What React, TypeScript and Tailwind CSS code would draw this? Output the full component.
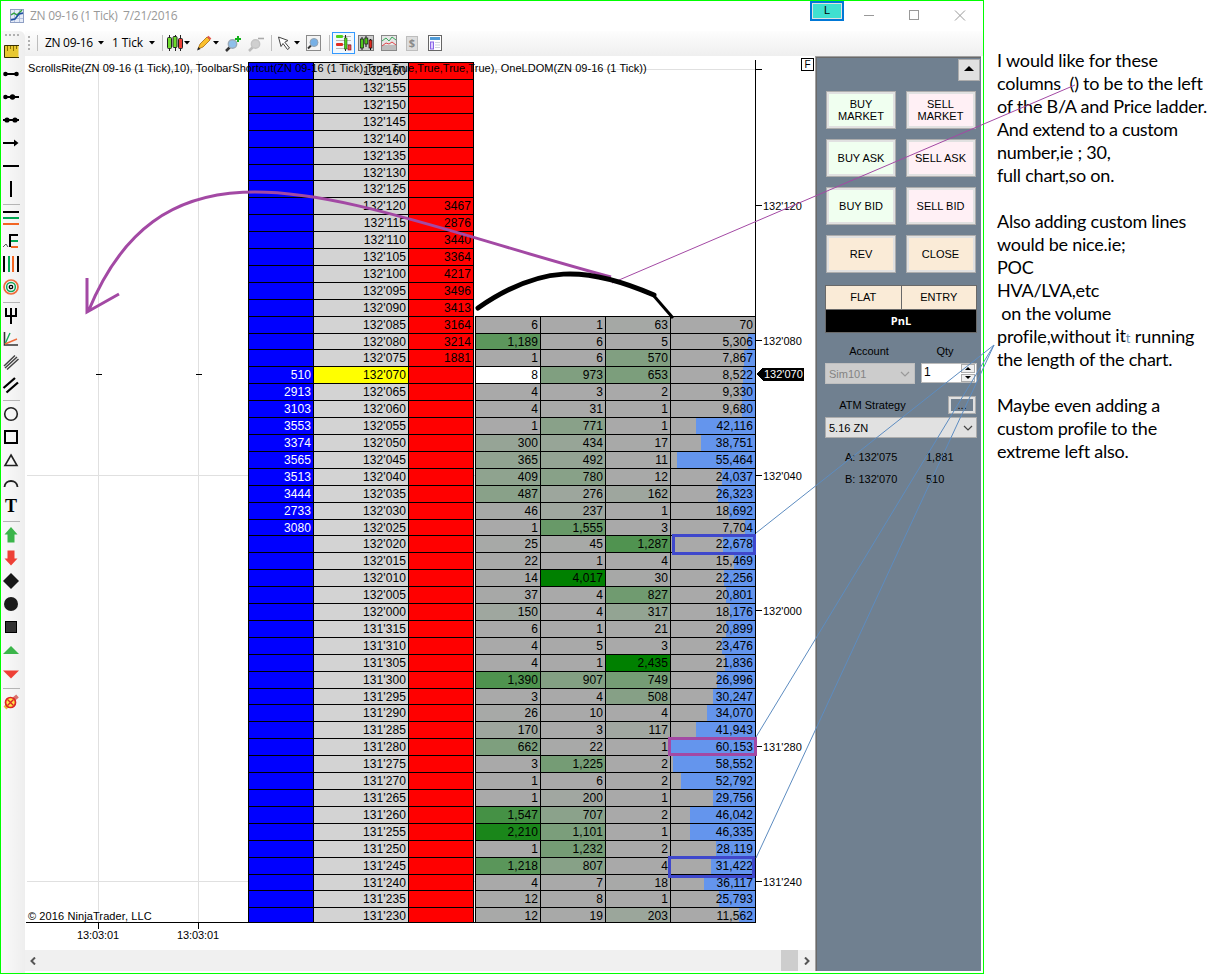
import type { ReactNode } from "react";

type Row = { price: string; bid?: string; ask?: string; cells?: [number, number, number, number] };

const ROWS: Row[] = [
  { price: "132'160" }, { price: "132'155" }, { price: "132'150" }, { price: "132'145" },
  { price: "132'140" }, { price: "132'135" }, { price: "132'130" }, { price: "132'125" },
  { price: "132'120", ask: "3467" },
  { price: "132'115", ask: "2876" },
  { price: "132'110", ask: "3440" },
  { price: "132'105", ask: "3364" },
  { price: "132'100", ask: "4217" },
  { price: "132'095", ask: "3496" },
  { price: "132'090", ask: "3413" },
  { price: "132'085", ask: "3164", cells: [6, 1, 63, 70] },
  { price: "132'080", ask: "3214", cells: [1189, 6, 5, 5306] },
  { price: "132'075", ask: "1881", cells: [1, 6, 570, 7867] },
  { price: "132'070", bid: "510", cells: [8, 973, 653, 8522] },
  { price: "132'065", bid: "2913", cells: [4, 3, 2, 9330] },
  { price: "132'060", bid: "3103", cells: [4, 31, 1, 9680] },
  { price: "132'055", bid: "3553", cells: [1, 771, 1, 42116] },
  { price: "132'050", bid: "3374", cells: [300, 434, 17, 38751] },
  { price: "132'045", bid: "3565", cells: [365, 492, 11, 55464] },
  { price: "132'040", bid: "3513", cells: [409, 780, 12, 24037] },
  { price: "132'035", bid: "3444", cells: [487, 276, 162, 26323] },
  { price: "132'030", bid: "2733", cells: [46, 237, 1, 18692] },
  { price: "132'025", bid: "3080", cells: [1, 1555, 3, 7704] },
  { price: "132'020", cells: [25, 45, 1287, 22678] },
  { price: "132'015", cells: [22, 1, 4, 15469] },
  { price: "132'010", cells: [14, 4017, 30, 22256] },
  { price: "132'005", cells: [37, 4, 827, 20801] },
  { price: "132'000", cells: [150, 4, 317, 18176] },
  { price: "131'315", cells: [6, 1, 21, 20899] },
  { price: "131'310", cells: [4, 5, 3, 23476] },
  { price: "131'305", cells: [4, 1, 2435, 21836] },
  { price: "131'300", cells: [1390, 907, 749, 26996] },
  { price: "131'295", cells: [3, 4, 508, 30247] },
  { price: "131'290", cells: [26, 10, 4, 34070] },
  { price: "131'285", cells: [170, 3, 117, 41943] },
  { price: "131'280", cells: [662, 22, 1, 60153] },
  { price: "131'275", cells: [3, 1225, 2, 58552] },
  { price: "131'270", cells: [1, 6, 2, 52792] },
  { price: "131'265", cells: [1, 200, 1, 29756] },
  { price: "131'260", cells: [1547, 707, 2, 46042] },
  { price: "131'255", cells: [2210, 1101, 1, 46335] },
  { price: "131'250", cells: [1, 1232, 2, 28119] },
  { price: "131'245", cells: [1218, 807, 4, 31422] },
  { price: "131'240", cells: [4, 7, 18, 36117] },
  { price: "131'235", cells: [12, 8, 1, 25793] },
  { price: "131'230", cells: [12, 19, 203, 11562] },
];

const LAST_PRICE = "132'070";
const SHORT_ROWS = [6, 16, 27, 37, 48];
const COLUMN_MAX = [2612, 4017, 2435];
const VOLUME_MAX = 60153;

// blends dark gray into green as the traded size nears the column's maximum
function heat(value: number, max: number) {
  const t = Math.min(1, value / max);
  const rb = Math.round(169 * (1 - t));
  return `rgb(${rb}, ${Math.round(169 - 41 * t)}, ${rb})`;
}

function rowHeight(i: number) {
  if (i === ROWS.length - 1) return "h-[15px]";
  return SHORT_ROWS.includes(i) ? "h-[16px]" : "h-[17px]";
}

function Ladder() {
  return (
    <div className="w-[508px] text-[12px] leading-[17px] tracking-[0.1px] text-black">
      {ROWS.map((row, i) => (
        <div key={row.price} className={`flex ${rowHeight(i)}`}>
          <div className="flex w-[226px] border-l border-black">
            <div className="w-[65px] border-t border-r border-black bg-[#0000ff] pr-[2px] text-right text-white">{row.bid}</div>
            <div className={`w-[95px] border-t border-r border-black pr-[2px] text-right ${row.price === LAST_PRICE ? "bg-[#ffff00]" : "bg-[#d3d3d3]"}`}>{row.price}</div>
            <div className="w-[65px] border-t border-r border-black bg-[#ff0000] pr-[2px] text-right">{row.ask}</div>
          </div>
          {row.cells && (
            <div className="ml-px flex border-l border-black">
              {row.cells.slice(0, 3).map((v, c) => (
                <div
                  key={c}
                  className="w-[65px] border-t border-r border-black pr-[2px] text-right"
                  style={{ background: row.price === LAST_PRICE && c === 0 ? "#fff" : heat(v, COLUMN_MAX[c]) }}
                >
                  {v.toLocaleString("en-US")}
                </div>
              ))}
              <div className="relative w-[85px] border-t border-r border-black bg-[#a9a9a9] pr-[2px] text-right">
                <div className="absolute inset-y-0 right-0 max-w-full bg-[#6495ed]" style={{ width: Math.floor((row.cells[3] / VOLUME_MAX) * 85) }} />
                <span className="relative">{row.cells[3].toLocaleString("en-US")}</span>
              </div>
            </div>
          )}
        </div>
      ))}
      <div className="h-px bg-black" />
    </div>
  );
}

const PRICE_TICKS: [number, string][] = [
  [206, "132'120"], [341, "132'080"], [476, "132'040"], [611, "132'000"], [747, "131'280"], [882, "131'240"],
];

function ChartGrid() {
  return (
    <svg className="absolute inset-0" width="790" height="894" viewBox="25 56 790 894" shapeRendering="crispEdges">
      <path d="M27 69.5H755M27 475.5H755M27 881.5H755M98.5 61V922M198.5 61V922" stroke="#e0e0e0" fill="none" />
      <path d="M755.5 60V923M26 922.5H756M98.5 923V929M198.5 923V929M96 374.5H102M196 374.5H202M756 69.5H762" stroke="#000" fill="none" />
      {PRICE_TICKS.map(([y]) => <path key={y} d={`M756 ${y - 0.5}H762`} stroke="#000" />)}
      <path d="M757 374L763 367.5H804V381H763Z" fill="#000" />
    </svg>
  );
}

function ChartLabels() {
  return (
    <div className="absolute inset-0 text-[11px] leading-[14px] whitespace-nowrap text-black">
      <span className="absolute top-[5px] left-[3px] text-[11px] tracking-[0.05px]">
        ScrollsRite(ZN 09-16 (1 Tick),10), ToolbarShortcut(ZN 09-16 (1 Tick),True,True,True,True,True), OneLDOM(ZN 09-16 (1 Tick))
      </span>
      {PRICE_TICKS.map(([y, label]) => (
        <span key={label} className="absolute left-[738px]" style={{ top: y - 63 }}>{label}</span>
      ))}
      <span className="absolute top-[311px] left-[739px] text-white">132'070</span>
      <span className="absolute top-[853px] left-[3px] tracking-[0.1px]">© 2016 NinjaTrader, LLC</span>
      <span className="absolute top-[872px] left-[52px] tracking-[-0.1px]">13:03:01</span>
      <span className="absolute top-[872px] left-[152px] tracking-[-0.1px]">13:03:01</span>
      <span className="absolute top-[2px] left-[776px] flex h-[13px] w-[13px] items-center justify-center border border-black text-[10px]">F</span>
    </div>
  );
}

function Tool({ children }: { children: ReactNode }) {
  return (
    <div className="flex h-[23px] items-center justify-center">
      <svg width="17" height="17" viewBox="0 0 17 17" fill="none" stroke="#000" strokeWidth="2">{children}</svg>
    </div>
  );
}

function ToolSeparator() {
  return <div className="flex h-[6px] items-center"><div className="ml-[2px] h-px w-[17px] bg-[#b5b5b5]" /></div>;
}

function DrawingTools() {
  return (
    <div className="w-[24px] shrink-0 rounded-tr-md bg-linear-to-r from-[#fafafa] to-[#eeeeee]">
      <div className="flex h-[8px] items-end gap-[2px] pb-[3px] pl-[4px]">
        {[0, 1, 2, 3].map((n) => <i key={n} className="h-[2px] w-[2px] bg-[#b0b0b0]" />)}
      </div>
      <div className="w-[19px] pt-px">
        <Tool>
          <rect x="2.5" y="2.5" width="14" height="12" fill="#e8c832" stroke="none" />
          <path d="M2.5 14.5V2.5H17M2.5 14.5H17" stroke="#3a3000" strokeWidth="1" />
          <path d="M5.5 3V8M8.5 3V6M11.5 3V8M14.5 3V6" stroke="#8a7000" strokeWidth="1" />
        </Tool>
        <Tool><path d="M2 8H15" /><circle cx="3.5" cy="8" r="2.3" fill="#000" stroke="none" /><circle cx="14.5" cy="8" r="2.3" fill="#000" stroke="none" /></Tool>
        <Tool><path d="M2 8H17" /><circle cx="3.5" cy="8" r="2.3" fill="#000" stroke="none" /><circle cx="10.5" cy="8" r="2.7" fill="#000" stroke="none" /></Tool>
        <Tool><path d="M1 8H17" /><circle cx="5" cy="8" r="2.6" fill="#000" stroke="none" /><circle cx="13" cy="8" r="2.6" fill="#000" stroke="none" /></Tool>
        <Tool><path d="M1 8H14" /><path d="M12 4.5L16.5 8L12 11.5Z" fill="#000" stroke="none" /></Tool>
        <Tool><path d="M1 8H17" /></Tool>
        <Tool><path d="M9 0V16" /></Tool>
        <ToolSeparator />
        <Tool><path d="M1 2H17" /><path d="M1 8H17" stroke="#00a651" /><path d="M1 14H17" stroke="#f26522" /></Tool>
        <Tool><path d="M16 2H8V14" /><path d="M9 8H16" stroke="#00a651" /><path d="M9 14H16" stroke="#f26522" /><path d="M1 14L4 11L6 14" strokeWidth="1" stroke="#555" /></Tool>
        <Tool><path d="M2 0V16" /><path d="M7 0V16" stroke="#00a651" /><path d="M11 0V16" stroke="#f26522" /><path d="M16 0V16" /></Tool>
        <Tool><circle cx="9" cy="8" r="7" stroke="#ee6b3b" strokeWidth="1.7" /><circle cx="9" cy="8" r="4.4" stroke="#13a65a" strokeWidth="1.5" /><circle cx="9" cy="8" r="1.7" strokeWidth="1.3" /></Tool>
        <ToolSeparator />
        <Tool><path d="M9 0V16M4 0V8H14V0" /></Tool>
        <Tool><path d="M2.5 1V14H16" strokeWidth="1.6" stroke="#333" /><path d="M3 13L8 2" stroke="#13a65a" strokeWidth="1.4" /><path d="M3 13L15 8" stroke="#ee6b3b" strokeWidth="1.4" /></Tool>
        <Tool><path d="M2 12L13 1.5M3 14L15 3M5 15.5L16.5 5" stroke="#444" strokeWidth="1.5" /></Tool>
        <Tool><path d="M1.5 11L13 1M4.5 15.5L16 5.5" strokeWidth="2.3" /></Tool>
        <ToolSeparator />
        <Tool><circle cx="9" cy="8" r="6.3" strokeWidth="1.6" stroke="#222" /></Tool>
        <Tool><rect x="3" y="2" width="12" height="12" /></Tool>
        <Tool><path d="M9 3L15 13.5H3Z" strokeWidth="1.6" stroke="#222" /></Tool>
        <Tool><path d="M2.5 12C3 4 15 4 15.5 12" strokeWidth="1.8" stroke="#222" /></Tool>
        <div className="flex h-[23px] items-center justify-center pl-px font-['Liberation_Serif',serif] text-[18px] font-bold">T</div>
        <ToolSeparator />
        <Tool><path d="M9 0L15.5 7.5H12.5V15.5H5.5V7.5H2.5Z" fill="#3bb54a" stroke="none" /></Tool>
        <Tool><path d="M9 15.5L15.5 8.5H12.5V.5H5.5V8.5H2.5Z" fill="#ee4036" stroke="none" /></Tool>
        <Tool><path d="M9 0L17 8L9 16L1 8Z" fill="#181818" stroke="none" /></Tool>
        <Tool><circle cx="9" cy="8" r="7" fill="#1c1c1c" stroke="none" /></Tool>
        <Tool><rect x="3.5" y="2.5" width="11" height="11" fill="#333" stroke="#000" strokeWidth="1" /></Tool>
        <Tool><path d="M9 4L17 12H1Z" fill="#3bb54a" stroke="none" /></Tool>
        <Tool><path d="M9 13.5L17 5.5H1Z" fill="#ee4036" stroke="none" /></Tool>
        <ToolSeparator />
        <Tool>
          <path d="M3 14L6 11" stroke="#e8b83a" strokeWidth="4" />
          <path d="M12 5L15.5 2" stroke="#d9706b" strokeWidth="4" />
          <circle cx="8.5" cy="8.5" r="5" fill="#ffe34a" stroke="#dc2626" strokeWidth="1.7" />
          <path d="M5.5 5.5L11.5 11.5M11.5 5.5L5.5 11.5" stroke="#dc2626" strokeWidth="1.4" />
        </Tool>
      </div>
    </div>
  );
}

function Caret({ className }: { className: string }) {
  return <svg className={className} width="6" height="4" viewBox="0 0 6 4"><path d="M0 0H6L3 3.5Z" /></svg>;
}

function Divider({ className }: { className: string }) {
  return <div className={`h-[16px] w-px bg-[#bdbdbd] ${className}`} />;
}

function Magnifier({ dim, className, children }: { dim?: boolean; className: string; children: ReactNode }) {
  return (
    <svg className={className} width="17" height="17" viewBox="0 0 17 17">
      <path d="M1 16L5 12" stroke={dim ? "#bbb" : "#333"} strokeWidth="2.5" />
      <circle cx="7.5" cy="9" r="4.2" fill={dim ? "#cfcfcf" : "#8fc0ea"} stroke={dim ? "#c4c4c4" : "#9aa9b8"} strokeWidth="1.4" />
      {children}
    </svg>
  );
}

function Toolbar() {
  return (
    <div className="flex h-[25px] items-center bg-linear-to-b from-[#fdfdfd] to-[#efefef] pb-px font-['Open_Sans','Noto_Sans',sans-serif] text-[12px] text-black">
      <div className="ml-[3px] flex flex-col gap-[2px]">
        {[0, 1, 2, 3].map((n) => <i key={n} className="h-[2px] w-[2px] bg-[#b0b0b0]" />)}
      </div>
      <Divider className="ml-[7px]" />
      <span className="ml-[7px] w-[51px] whitespace-nowrap tracking-[-0.3px]">ZN 09-16</span>
      <Caret className="ml-[2px]" />
      <span className="ml-[8px] w-[33px] whitespace-nowrap tracking-[-0.1px]">1 Tick</span>
      <Caret className="ml-[4px]" />
      <Divider className="ml-[7px]" />
      <svg className="ml-[4px]" width="16" height="16" viewBox="0 0 16 16" stroke="#222" strokeWidth="1">
        <path d="M2.5 0V16M8.5 0V16M13.5 0V16" />
        <rect x="0.5" y="2.5" width="4" height="11" rx="1" fill="#6ddc2c" />
        <rect x="6" y="1.5" width="4" height="11" rx="1" fill="#6ddc2c" />
        <rect x="11.5" y="3.5" width="4" height="10" rx="1" fill="#ee4036" />
      </svg>
      <Caret className="ml-px" />
      <svg className="ml-[6px]" width="16" height="16" viewBox="0 0 16 16">
        <path d="M2 14L4 9L11 2L14 5L7 12Z" fill="#fbc02d" stroke="#a8690c" strokeWidth=".8" />
        <path d="M11 2L12.5.7L15.3 3.5L14 5Z" fill="#e2574c" />
        <path d="M1 15.5L2.5 12L4.5 14Z" fill="#222" />
      </svg>
      <Caret className="ml-[1px]" />
      <Magnifier className="ml-[6px]"><path d="M13 1V7M10 4H16" stroke="#12b01b" strokeWidth="2" /></Magnifier>
      <Magnifier className="ml-[6px]" dim><path d="M10 3.5H16" stroke="#aaa" strokeWidth="1.6" /></Magnifier>
      <Divider className="ml-[6px]" />
      <svg className="ml-[5px]" width="14" height="16" viewBox="0 0 14 16">
        <path d="M1.5 2L11 5.5L7.8 7.2L12.5 13L10.5 14.5L6 8.5L4 11.5Z" fill="#fff" stroke="#444" />
      </svg>
      <Caret className="ml-[3px]" />
      <svg className="ml-[6px]" width="16" height="16" viewBox="0 0 16 16">
        <rect x=".5" y=".5" width="14" height="15" fill="#f4f4f4" stroke="#8a8a8a" />
        <path d="M2 13.5L5 10.5" stroke="#333" strokeWidth="2" />
        <circle cx="8" cy="7.5" r="4" fill="#76b0e6" stroke="#95a3b0" />
      </svg>
      <Divider className="ml-[7px]" />
      <div className="ml-[2px] flex h-[22px] w-[23px] items-center justify-center border border-[#3399ff] bg-[#f2f8fd]">
        <svg width="17" height="16" viewBox="0 0 17 16">
          <path d="M1 1.5H16M1 5.5H16M1 9.5H16M1 13.5H16" stroke="#bbb" />
          <rect x="1" y="0" width="7" height="3" rx="1" fill="#4fd21c" />
          <rect x="1" y="8" width="7" height="3" rx="1" fill="#e02a20" />
          <path d="M10.5 0V16" stroke="#222" />
          <rect x="9.5" y="3" width="2.5" height="11" fill="#4fd21c" stroke="#285c12" strokeWidth=".6" />
          <rect x="13" y="10" width="3" height="5" fill="#e25a4e" stroke="#802" strokeWidth=".6" />
        </svg>
      </div>
      <svg className="ml-[3px]" width="16" height="16" viewBox="0 0 16 16">
        <rect x=".5" y=".5" width="15" height="15" fill="#cdcdcd" stroke="#777" />
        <path d="M4 2V15M8 1V12M12.5 4V15" stroke="#111" />
        <rect x="2.5" y="4" width="3" height="9" fill="#4fc61c" stroke="#111" strokeWidth=".7" />
        <rect x="6.8" y="3" width="3" height="6" fill="#4fc61c" stroke="#111" strokeWidth=".7" />
        <rect x="11" y="5" width="3" height="8" fill="#e02a20" stroke="#111" strokeWidth=".7" />
      </svg>
      <svg className="ml-[7px]" width="16" height="16" viewBox="0 0 16 16">
        <rect x=".5" y=".5" width="15" height="15" fill="#e6e6e6" stroke="#888" />
        <rect x="1" y="10" width="14" height="5" fill="#bdbdbd" />
        <path d="M1 6L5 3L8 6L11 2L15 5" stroke="#3aa85a" fill="none" />
        <path d="M1 11L5 8L8 9L11 7L15 10" stroke="#e0474c" fill="none" />
      </svg>
      <div className="ml-[9px] flex h-[15px] w-[12px] items-center justify-center border border-[#bdbdbd] bg-[#ddd] text-[11px] font-bold text-[#8a8a8a]">$</div>
      <svg className="ml-[10px]" width="15" height="16" viewBox="0 0 15 16">
        <rect x=".5" y=".5" width="13" height="15" fill="#fff" stroke="#666" />
        <rect x="2" y="2" width="10" height="3" fill="#4f9ad6" />
        <rect x="2.5" y="7" width="3" height="7" fill="#ddd0ff" stroke="#8a66e6" />
        <path d="M7 7.5H12M7 10H12M7 12.5H12" stroke="#cdd3dd" />
      </svg>
    </div>
  );
}

function TitleBar() {
  return (
    <div className="relative flex h-[30px] items-center pl-[9px] font-['Open_Sans','Noto_Sans',sans-serif] text-[12px] text-[#999]">
      <svg width="14" height="14" viewBox="0 0 14 14">
        <rect x=".5" y=".5" width="13" height="13" fill="#e6ecf8" stroke="#8fa0c4" />
        <path d="M4.5 1V13M9.5 1V13M1 5H13M1 9.5H13" stroke="#b4c2e0" />
        <path d="M1 6L4 4L7 6L12 1" stroke="#2fa33a" strokeWidth="1.4" fill="none" />
        <path d="M1 11L5 10L9 5L13 4" stroke="#1d4fa0" strokeWidth="1.6" fill="none" />
      </svg>
      <span className="ml-[6px] whitespace-pre tracking-[-0.28px]">ZN 09-16 (1 Tick)  7/21/2016</span>
      <div className="absolute top-0 left-[809px] flex h-[20px] w-[34px] items-center justify-center border-2 border-[#0078d7] bg-[#e1e1e1] p-px">
        <div className="flex h-full w-full items-center justify-center bg-[#40e0d0] pb-px font-['Liberation_Sans',sans-serif] text-[11px] text-black">L</div>
      </div>
      <svg className="absolute top-[9px] left-[863px]" width="103" height="12" viewBox="0 0 103 12" stroke="#999" fill="none">
        <path d="M0 5.5H10" /><rect x="45.5" y="0.5" width="9" height="9" /><path d="M91 .5L101 10.5M101 .5L91 10.5" />
      </svg>
    </div>
  );
}

function OrderButton({ label, tone }: { label: string; tone: string }) {
  return (
    <button className="h-[38px] w-[70px] border border-[#adadad] bg-[#e1e1e1] p-[2px]">
      <span className={`flex h-full w-full items-center justify-center pb-px text-center leading-[12px] ${tone}`}>{label}</span>
    </button>
  );
}

const ORDER_BUTTONS = [
  { label: "BUY MARKET", tone: "bg-[#f0fff0] px-[8px]" },
  { label: "SELL MARKET", tone: "bg-[#fff0f5] px-[8px]" },
  { label: "BUY ASK", tone: "bg-[#f0fff0]" },
  { label: "SELL ASK", tone: "bg-[#fff0f5]" },
  { label: "BUY BID", tone: "bg-[#f0fff0]" },
  { label: "SELL BID", tone: "bg-[#fff0f5]" },
  { label: "REV", tone: "bg-[#faebd7]" },
  { label: "CLOSE", tone: "bg-[#faebd7]" },
];

function Chevron({ color }: { color: string }) {
  return <svg width="10" height="6" viewBox="0 0 10 6" fill="none" stroke={color} strokeWidth="1.2"><path d="M1 1L5 5L9 1" /></svg>;
}

function OrderPanel() {
  return (
    <div className="mr-[2px] mb-[2px] w-[166px] shrink-0 border-t border-l border-[#a0a0a0] bg-[#708090] text-[11px] leading-[14px] text-black">
      <div className="h-full border-t border-l border-[#696969] pl-[8px]">
        <div className="flex h-[33px] justify-end pt-[1px] pr-px">
          <div className="flex h-[22px] w-[22px] items-center justify-center border border-[#adadad] bg-[#e1e1e1] pb-[3px]">
            <svg width="10" height="5" viewBox="0 0 10 5"><path d="M0 5L5 0L10 5Z" /></svg>
          </div>
        </div>
        <div className="grid w-[150px] grid-cols-2 gap-x-[10px] gap-y-[10px] pl-px">
          {ORDER_BUTTONS.map((b) => <OrderButton key={b.label} {...b} />)}
        </div>
        <div className="mt-[12px] w-[152px] border border-[#696969]">
          <div className="flex h-[23px] bg-[#faebd7]">
            <div className="flex flex-1 items-center justify-center border-r border-[#696969] pb-px">FLAT</div>
            <div className="flex flex-1 items-center justify-center pb-px">ENTRY</div>
          </div>
          <div className="flex h-[23px] items-center justify-center border-t border-[#696969] bg-black font-['Open_Sans',sans-serif] font-bold text-white">PnL</div>
        </div>
        <div className="mt-[11px] flex w-[152px] text-center">
          <span className="w-[88px]">Account</span>
          <span className="ml-[8px] w-[48px]">Qty</span>
        </div>
        <div className="mt-[5px] flex w-[152px] items-start justify-between">
          <div className="flex h-[21px] w-[90px] items-center justify-between border border-[#bfbfbf] bg-[#cccccc] pr-[4px] pl-[3px] text-[#838383]">
            Sim101<Chevron color="#999" />
          </div>
          <div className="flex h-[20px] w-[56px] justify-between border border-[#bbb] bg-white pl-[2px] text-[12px]">
            <span className="pt-px">1</span>
            <div className="mr-px flex w-[14px] flex-col gap-px">
              <div className="flex flex-1 items-center justify-center border border-[#adadad] bg-[#f0f0f0]"><svg width="6" height="3" viewBox="0 0 6 3"><path d="M0 3L3 0L6 3Z" /></svg></div>
              <div className="flex flex-1 items-center justify-center border border-[#adadad] bg-[#f0f0f0]"><svg width="6" height="3" viewBox="0 0 6 3"><path d="M0 0L3 3L6 0Z" /></svg></div>
            </div>
          </div>
        </div>
        <div className="mt-[12px] flex w-[152px] items-center">
          <span className="w-[95px] text-center">ATM Strategy</span>
          <div className="ml-[28px] flex h-[18px] w-[28px] items-center justify-center border-[3px] border-[#e1e1e1] outline outline-1 -outline-offset-1 outline-[#adadad]">...</div>
        </div>
        <div className="mt-[3px] flex h-[21px] w-[152px] items-center justify-between border border-[#adadad] bg-[#e1e1e1] pr-[3px] pl-[3px]">
          5.16 ZN<Chevron color="#444" />
        </div>
        <div className="mt-[12px] flex pl-[20px]"><span className="w-[81px]">A: 132'075</span><span>1,881</span></div>
        <div className="mt-[8px] flex pl-[20px]"><span className="w-[81px]">B: 132'070</span><span>510</span></div>
      </div>
    </div>
  );
}

function Notes() {
  return (
    <div className="pt-[49px] pl-[13px] font-['Lato',sans-serif] text-[18px] leading-[23px] tracking-[-0.24px] whitespace-pre text-black">
      <p className="tracking-[-0.15px]">I would like for these</p>
      <p>columns  () to be to the left</p>
      <p>of the B/A and Price ladder.</p>
      <p className="tracking-[-0.36px]">And extend to a custom</p>
      <p>number,ie ; 30,</p>
      <p>full chart,so on.</p>
      <p className="mt-[23px]">Also adding custom lines</p>
      <p>would be nice.ie;</p>
      <p>POC</p>
      <p>HVA/LVA,etc</p>
      <p> on the volume</p>
      <p className="h-[23px] tracking-[-0.14px]">profile,without <span className="relative -top-px">it</span><span className="text-[13px] leading-none text-[#6a8fb0]">t</span> running</p>
      <p>the length of the chart.</p>
      <p className="mt-[23px]">Maybe even adding a</p>
      <p>custom profile to the</p>
      <p>extreme left also.</p>
    </div>
  );
}

function Markup() {
  return (
    <svg className="pointer-events-none absolute inset-0" width="1208" height="974" viewBox="0 0 1208 974" fill="none">
      <path d="M611 277C350 207 170 112 88 312M87 278V312L119 294" stroke="#a349a4" strokeWidth="3" />
      <path d="M612 283L1075 85" stroke="#a349a4" />
      <path d="M478 308C540 265 585 265 654 295" stroke="#000" strokeWidth="5" strokeLinecap="round" />
      <path d="M654 296L673 318" stroke="#000" strokeWidth="3" />
      <path d="M994 345L756 533M994 345L756 737M994 345L756 858" stroke="#5d8cc0" />
      <rect x="673.5" y="535.5" width="81" height="18" stroke="#3f48cc" strokeWidth="3" />
      <rect x="669.5" y="738.5" width="86" height="16" stroke="#a349a4" strokeWidth="3" />
      <rect x="669.5" y="857.5" width="84" height="19" stroke="#3f48cc" strokeWidth="3" />
    </svg>
  );
}

export default function App() {
  return (
    <div className="relative flex h-[974px] w-[1208px] overflow-hidden bg-white font-['Liberation_Sans',Arial,sans-serif]">
      <div className="flex w-[984px] shrink-0 flex-col border border-[#00ff00]">
        <TitleBar />
        <div className="flex min-h-0 flex-1">
          <DrawingTools />
          <div className="flex min-w-0 flex-1 flex-col">
            <Toolbar />
            <div className="flex min-h-0 flex-1">
              <div className="flex w-[790px] shrink-0 flex-col">
                <div className="relative flex-1 pt-[6px] pl-[223px]">
                  <ChartGrid />
                  <div className="relative"><Ladder /></div>
                  <ChartLabels />
                </div>
                <div className="mb-[2px] flex h-[21px] items-center bg-[#f0f0f0]">
                  <svg className="ml-[5px]" width="6" height="8" viewBox="0 0 6 8" fill="none" stroke="#555" strokeWidth="2"><path d="M5 .5L1.5 4L5 7.5" /></svg>
                  <div className="ml-[745px] h-full w-[17px] bg-[#cdcdcd]" />
                  <svg className="ml-[6px]" width="6" height="8" viewBox="0 0 6 8" fill="none" stroke="#555" strokeWidth="2"><path d="M1 .5L4.5 4L1 7.5" /></svg>
                </div>
              </div>
              <OrderPanel />
            </div>
          </div>
        </div>
      </div>
      <Notes />
      <Markup />
    </div>
  );
}
